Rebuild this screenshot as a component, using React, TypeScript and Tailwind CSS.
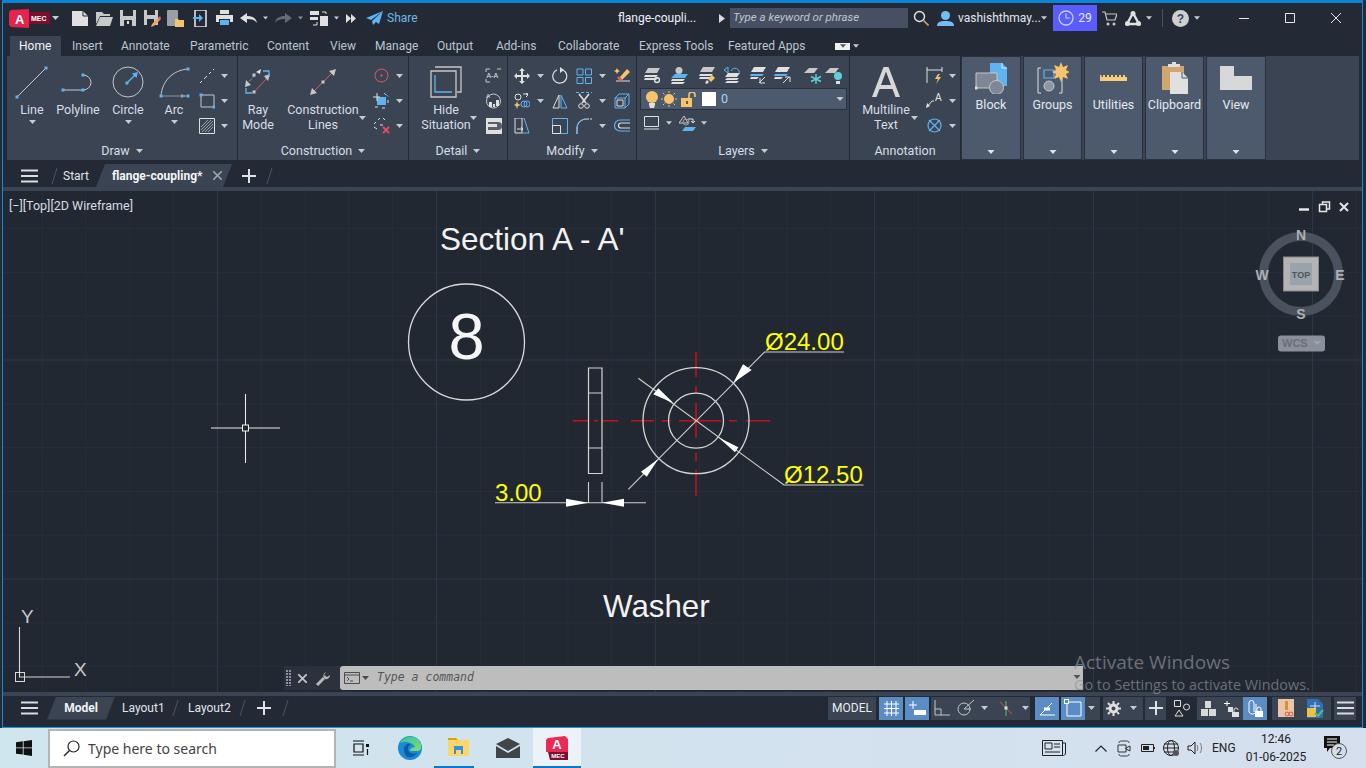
import React from "react";

const G = "#c8c8c8", L = "#e0e0e0", B = "#5eb4f2", Y = "#f7c46c", R = "#e0566a";

const Ic = ({ w = 16, h = 16, children }: any) => (
  <svg width={w} height={h} viewBox={`0 0 ${w} ${h}`} fill="none" className="block shrink-0">{children}</svg>
);
const Sq = ({ x, y, s = 3, c = B }: any) => <rect x={x - s / 2} y={y - s / 2} width={s} height={s} fill={c} />;
const Caret = ({ c = "#c5cbd3", w = 7 }: any) => (
  <svg width={w} height={4} viewBox="0 0 7 4" className="block shrink-0"><path d="M0 0h7L3.5 4z" fill={c} /></svg>
);
const Slash = ({ c = "#4c5462" }: any) => (
  <svg width={7} height={20} viewBox="0 0 7 20" className="block shrink-0"><path d="M6 2 1 18" stroke={c} /></svg>
);
const Burger = () => (
  <svg width={17} height={14} viewBox="0 0 17 14" className="block shrink-0"><path d="M0 1.5h17M0 7h17M0 12.5h17" stroke="#d8dce2" strokeWidth="2" /></svg>
);
const Plus = () => (
  <svg width={14} height={14} viewBox="0 0 14 14" className="block shrink-0"><path d="M7 0v14M0 7h14" stroke="#dfe3e8" strokeWidth="2" /></svg>
);

/* quick access */
const QNew = () => <Ic w={16} h={15}><path d="M0 0h11l5 5v10H0z" fill={L} /><path d="M11 0v5h5" stroke="#232a35" /></Ic>;
const QOpen = () => <Ic w={18} h={15}><path d="M1 1h6l2 2h6v2H5L1 13z" fill={G} /><path d="M5 6h13l-3 9H1z" fill={G} /></Ic>;
const QSave = () => <Ic w={16} h={16}><path d="M0 0h16v16H0z" fill={G} /><path d="M3 0h10v6H3z" fill="#232a35" /><path d="M4 10h8v6H4z" fill="#232a35" /><path d="M7 11h2v3H7z" fill={L} /></Ic>;
const QSaveAs = () => <Ic w={17} h={17}><path d="M0 0h14v15H0z" fill={G} /><path d="M3 0h8v5H3z" fill="#232a35" /><path d="M3 9h7v6H3z" fill="#232a35" /><path d="m8 14 7-7 2 2-7 7-3 1z" fill="#f0a35c" /><path d="m14 8 2-2 1 2-2 2z" fill="#e0566a" /></Ic>;
const QPhoneOpen = () => <Ic w={18} h={17}><rect x={0} y={0} width={11} height={16} rx={1} fill="#9a9fa6" /><path d="M8 9h3l1 1h5v7H8z" fill={Y} /></Ic>;
const QPhoneSave = () => <Ic w={14} h={17}><rect x={2} y={0} width={11} height={17} rx={1} stroke={L} strokeWidth="1.6" /><path d="M0 7h6V4l4 4-4 4V9H0z" fill={B} /></Ic>;
const QPrint = () => <Ic w={17} h={16}><path d="M4 0h9v4H4z" fill={L} /><path d="M0 5h17v7H0z" fill={L} /><path d="M3 9h11v7H3z" fill="#232a35" /><path d="M4 10h9v5H4z" fill={B} /></Ic>;
const QUndo = ({ c = L }: any) => <Ic w={17} h={11}><path d="M0 5 7 0v3c6 0 9 2 10 7-2-3-5-4-10-4v4z" fill={c} /></Ic>;
const QRedo = () => <Ic w={17} h={11}><path d="M17 5 10 0v3C4 3 1 5 0 10c2-3 5-4 10-4v4z" fill="#656c77" /></Ic>;
const QWorkspace = () => <Ic w={18} h={15}><path d="M0 0h9v4H0zM10 5h8v10h-8zM0 6h8v3H0z" fill={L} /><path d="M12 1h4v2M3 14h4v-3" stroke={L} /></Ic>;
const QMore = () => <Ic w={10} h={9}><path d="M0 0l5 4.5L0 9zM5 0l5 4.5L5 9z" fill={L} /></Ic>;
const QShare = () => <Ic w={17} h={14}><path d="M17 0 0 7l5 2zM17 0 6 10l1 4 3-3 3 2z" fill={B} /></Ic>;

/* draw panel */
const ILine = () => <Ic w={36} h={36}><path d="M3 33 32 4" stroke={G} /><Sq x={3} y={33} /><Sq x={32} y={4} /></Ic>;
const IPoly = () => <Ic w={36} h={36}><path d="M3 26h20M23 11a8 7.5 0 0 1 0 15" stroke={G} /><Sq x={3} y={26} /><Sq x={23} y={26} /><Sq x={23} y={11} /></Ic>;
const ICircle = () => <Ic w={36} h={36}><circle cx={18} cy={18} r={15} stroke={G} /><path d="M18 18l8-8" stroke={B} strokeWidth="1.5" /><path d="m28 8-6 1.5 4.5 4.5z" fill={B} /><Sq x={17} y={19} /></Ic>;
const IArc = () => <Ic w={36} h={36}><path d="M5 32C6 17 17 6 32 5" stroke={G} /><path d="M5 32h24" stroke="#8e959e" /><path d="m31 32-6-2v4z" fill="#8e959e" /><Sq x={5} y={32} /><Sq x={32} y={32} /><Sq x={32} y={5} /></Ic>;
const ICLine = () => <Ic><path d="M1 15l2-2m2-2 3-3m2-2 2-2m2-2 1-1" stroke={L} /></Ic>;
const IRect = () => <Ic><path d="M2 2h13v12H2z" stroke={G} /><Sq x={2} y={2} /><Sq x={15} y={14} /></Ic>;
const IHatch = () => <Ic><path d="M.5.5h15v15H.5z" stroke={L} /><path d="M2 9l7-7M2 12l10-10M3 14 14 3M6 14l8-8M9 14l5-5" stroke="#9aa0a8" /></Ic>;
/* construction */
const IRay = () => <Ic w={32} h={32}><path d="M4 19 14 8" stroke="#9aa0a8" strokeDasharray="3 2" /><path d="M12 26 26 11" stroke={R} /><path d="m3 21 1-7 5 5zM28 8l-6 2 4 5z" fill={G} /><path d="m14 6 5-3-1 5z" fill={L} /><path d="M21 5h6v6" stroke={B} strokeWidth="1.3" /><path d="M4 22v5h6" stroke={B} strokeWidth="1.3" /><Sq x={12} y={26} c={G} /><Sq x={12} y={9} c={G} /></Ic>;
const ICons = () => <Ic w={32} h={32}><path d="M5 27 27 5" stroke={R} /><path d="m3 29 2-7 5 5zM29 3l-7 2 5 5z" fill={G} /><Sq x={16} y={16} c={G} /></Ic>;
const ICons1 = () => <Ic w={15} h={15}><circle cx={7.5} cy={7.5} r={6.5} stroke={R} /><Sq x={7.5} y={7.5} s={2} c={R} /></Ic>;
const ICons2 = () => <Ic w={17} h={17}><path d="M4 5h9v8H4z" fill={B} /><path d="M0 5h7M4 1v8M11 1l2 2M2 15h3M9 16h3M15 8v3" stroke={L} /><path d="M11 1l5 4" stroke={B} strokeDasharray="2 1" /></Ic>;
const ICons3 = () => <Ic w={17} h={17}><path d="M1 7l2-2M5 3l2-2M10 1l2 2M1 10l3 2M7 8h3" stroke={L} /><path d="m10 10 6 6M16 10l-6 6" stroke="#e8485a" strokeWidth="2" /></Ic>;
/* detail */
const IHide = () => <Ic w={32} h={32}><path d="M5 1h26v25h-4" stroke={G} strokeWidth="1.3" /><path d="M1 5h25v26H1z" stroke={G} strokeWidth="1.3" /><path d="M5 9v17h17" stroke={B} strokeWidth="1.3" /></Ic>;
const IDet1 = () => <Ic w={17} h={15}><path d="M5 1H1v3M1 11v3h4M12 1h4" stroke={G} /><text x={1.5} y={10} fill={L} fontSize={7} fontFamily="Liberation Sans">A-A</text></Ic>;
const IDet2 = () => <Ic w={17} h={17}><circle cx={8.5} cy={9} r={7} stroke={G} /><path d="M4 10h3v5H4zM8 12h2v3H8zM11 8h3v6h-3z" fill={L} /><text x={1} y={6} fill={L} fontSize={6} fontFamily="Liberation Sans">A</text></Ic>;
const IDet3 = () => <Ic w={16} h={16}><path d="M0 0h16v16H0z" fill={L} /><path d="M2 4h10a2 2 0 0 1 0 8H2z" fill="#5a5f67" /><path d="M2 6h9v3H2z" fill={L} /></Ic>;
/* modify */
const IMove = () => <Ic><path d="M8 0l3 3H9v4h4V5l3 3-3 3V9H9v4h2l-3 3-3-3h2V9H3v2L0 8l3-3v2h4V3H5z" fill={L} /></Ic>;
const IRot = () => <Ic w={16} h={17}><path d="M11 3a7 7 0 1 1-6-.2" stroke={L} strokeWidth="1.2" /><path d="M8 0v6l4-3z" fill={L} /></Ic>;
const IArr = () => <Ic><path d="M1 1h6v6H1zM9.5 1h6v6h-6zM1 9.5h6v6H1zM9.5 9.5h6v6h-6z" stroke={B} /></Ic>;
const IErase = () => <Ic><path d="M2 13h14" stroke={L} /><path d="m6 9 7-8 3 3-8 8z" fill={Y} /><path d="m3 10 2-2 3 4-2 1z" fill="#e85a5a" /><path d="m3 0 1 2 2 1-2 1-1 2-1-2-2-1 2-1z" fill={Y} /></Ic>;
const ICopy = () => <Ic><circle cx={4} cy={4} r={3} stroke={L} /><path d="M9 1h5l-2 0M12 4l2-2-2-2" stroke={L} /><circle cx={10} cy={11} r={3} stroke={B} /><circle cx={13} cy={11} r={3} stroke={B} /><path d="m3 8 1 3 3 1-3 1-1 3-1-3-2-1 2-1z" fill={Y} /></Ic>;
const IMir = () => <Ic><path d="M7 2v13H1z" stroke={L} /><path d="M9 2v13h6z" stroke={B} /></Ic>;
const ITrim = () => <Ic w={16} h={17}><path d="M0 .5h16" stroke={B} strokeDasharray="3 2" /><path d="m3 2 7 9M13 2l-7 9" stroke={L} strokeWidth="1.6" /><circle cx={5} cy={14} r={2.3} stroke={L} /><circle cx={11} cy={14} r={2.3} stroke={L} /></Ic>;
const I3D = () => <Ic><path d="M1 5h10v10H1zM1 5l4-4h10v10l-4 4M11 5l4-4" stroke={B} /><path d="M3 7h6v6H3z" stroke={L} /></Ic>;
const IStretch = () => <Ic><path d="M1 0h7v15H1z" stroke={L} /><path d="M8 0h2l5 15H8" stroke={B} /><path d="M3 11h6M7 9l2 2-2 2" stroke={L} /></Ic>;
const IScale = () => <Ic><path d="M.5.5h15v15H.5z" stroke={B} /><path d="M.5 7.5h8v8h-8z" stroke={L} /></Ic>;
const IFillet = () => <Ic><path d="M1 16v-5C1 5 5 1 11 1" stroke={L} /><path d="M1 16v-6C1 5 4 2 9 1" stroke={B} /><path d="M11 1h5" stroke={L} strokeDasharray="2 1" /></Ic>;
const IOffset = () => <Ic w={16} h={13}><path d="M16 1H6a5.5 5.5 0 0 0 0 11h10" stroke={B} strokeWidth="1.2" /><path d="M16 4H7a2.5 2.5 0 0 0 0 5h9" stroke={L} strokeWidth="1.2" /></Ic>;
/* layers */
const Stack = ({ top = G, mid = L }: any) => (<><path d="M4 0h12l-3 5H1z" fill={top} /><path d="M1 7h13l-2 2H0zM1 10h13l-2 2H0z" fill={mid} /></>);
const L1 = () => <Ic><Stack /><circle cx={13} cy={12} r={2.5} stroke={L} strokeWidth="1.4" /></Ic>;
const L2 = () => <Ic w={17} h={17}><circle cx={8} cy={3.5} r={3.5} fill={G} /><path d="M4 7h13l-3 4H0z" fill={B} /><path d="M1 12h13l-2 2H0zM1 15h13l-2 2H0z" fill={L} /></Ic>;
const L3 = () => <Ic w={17} h={17}><Stack /><path d="m9 12 4-4 3 3-4 4z" fill={Y} /><path d="m8 13 2 2-2 2-2-1z" fill={L} /></Ic>;
const L4 = () => <Ic w={17} h={17}><path d="M4 6h12l-3 4H1zM3 11h12l-2 2H1zM3 14h12l-2 2H1z" fill={L} /><path d="M7 4a4 4 0 0 1 8 3M0 3l4-3v6z" stroke={B} fill="none" /></Ic>;
const L5 = () => <Ic w={17} h={17}><path d="M4 0h12l-3 5H1z" fill={L} /><path d="M1 7h13l-2 2H0z" fill={B} /><path d="M1 10h8l-2 2H0z" fill={L} /><path d="m9 16 6-6M10 11v5h5" stroke={L} /></Ic>;
const L6 = () => <Ic w={17} h={17}><path d="M4 0h12l-3 5H1z" fill={L} /><path d="M1 7h13l-2 2H0z" fill={B} /><path d="M1 10h8l-2 2H0z" fill={L} /><path d="m9 16 6-6M11 10h5v5" stroke={L} /></Ic>;
const L7 = () => <Ic w={18} h={16}><path d="M5 0h9l-4 5H0z" fill={G} /><path d="M12 6v10M7 8.5l10 5M17 8.5l-10 5" stroke="#5fd0d8" strokeWidth="1.4" /></Ic>;
const L8 = () => <Ic w={18} h={16}><path d="M5 0h9l-4 5H0z" fill={G} /><circle cx={13} cy={8} r={4} fill="#5fd0d8" /><path d="M11 13h4v3h-4z" fill={L} /></Ic>;
const Bulb = () => <Ic w={12} h={17}><circle cx={6} cy={6} r={6} fill={Y} /><path d="M3 12h6v2l-1 3H4l-1-3z" fill={L} /></Ic>;
const Sun = () => <Ic w={16} h={16}><circle cx={8} cy={8} r={5} fill={Y} /><path d="M8 0v2M8 14v2M0 8h2M14 8h2M2 2l1.5 1.5M12.5 12.5 14 14M2 14l1.5-1.5M12.5 3.5 14 2" stroke={Y} /></Ic>;
const Lock = () => <Ic w={15} h={15}><path d="M0 6h11v9H0z" fill={Y} /><path d="M8 6V3a3 3 0 0 1 6 0v2" stroke={Y} strokeWidth="1.6" /><path d="M5 9h2v3H5z" fill="#7a5a20" /></Ic>;
const Mon = () => <Ic w={15} h={14}><path d="M.5.5h14v10H.5z" stroke={L} /><path d="M0 13h15" stroke={L} /></Ic>;
const LMatch = () => <Ic w={17} h={16}><path d="M5 1 0 8h9z" stroke={G} /><circle cx={7} cy={7} r={3} stroke="#9a9fa6" /><path d="M9 4h5v4M12 6l2 2 2-2" stroke={L} /><path d="M6 12h11l-3 4H3z" fill={B} /></Ic>;
/* annotation */
const IDim = () => <Ic w={17} h={17}><path d="M1 0v16M16 0v5M1 3h15" stroke={L} /><path d="m12 7-3 5h3l-2 5 5-7h-3l2-3z" fill={Y} /></Ic>;
const ILead = () => <Ic w={17} h={15}><path d="m1 14 5-6h2" stroke={L} /><path d="m0 15 1-5 3 3z" fill={L} /><text x={9} y={8} fontSize={10} fill={L} fontFamily="Liberation Sans">A</text></Ic>;
const ITable = () => <Ic w={15} h={15}><circle cx={7.5} cy={7.5} r={6.5} stroke={B} strokeWidth="1.2" /><path d="m2 2 11 11M13 2 2 13" stroke={B} strokeWidth="1.2" /></Ic>;
/* collapsed */
const PBlock = () => <Ic w={32} h={32}><path d="M15 1h12l5 5v18H15z" fill={B} /><path d="M27 1v5h5" stroke="#dceaf5" /><path d="M1 11h21v15H1z" fill="#7d8796" stroke={G} /><Sq x={1} y={26} c={L} /><circle cx={21.5} cy={25.5} r={7} fill="#7d8796" stroke={G} /></Ic>;
const PGroups = () => <Ic w={32} h={32}><path d="M4 6H1v25h3M22 31h3V6" stroke={L} /><path d="M7 8h10v8H7z" stroke={B} strokeWidth="1.2" /><circle cx={12} cy={24} r={5} fill="#8d96a3" stroke={G} /><path d="m24 0 2 5 5-2-2 5 4 2-4 2 2 5-5-2-2 5-2-5-5 2 2-5-4-2 4-2-2-5 5 2z" fill="#f7c46c" /></Ic>;
const PUtil = () => <Ic w={28} h={6}><path d="M0 0h1.500v2H3V0h2v2h2V0h2v2h2V0h2v2h2V0h2v2h2V0h2v2h2V0h2v2h2V0v6H0z" fill="#f6cd79" /></Ic>;
const PClip = () => <Ic w={26} h={32}><path d="M0 4h22v24H0z" fill="#d2a66f" /><path d="M6 2h4V0h4v2h4v3H6z" fill={L} /><path d="M8 10h12l6 6v16H8z" fill={L} /><path d="M20 10v6h6" stroke="#4d5a6d" /></Ic>;
const PView = () => <Ic w={32} h={24}><path d="M0 0h14v10h18v14H0z" fill="#d8d8d8" /></Ic>;
/* status */
const SGrid = () => <Ic w={15} h={15}><path d="M3 0v15M7.5 0v15M12 0v15M0 3h15M0 7.5h15M0 12h15" stroke="#fff" /></Ic>;
const SSnap = () => <Ic w={17} h={15}><path d="M4 0v8M0 4h8" stroke="#fff" /><path d="M5 9h12v5H5z" fill="#fff" /></Ic>;
const SOrtho = () => <Ic w={16} h={16}><path d="M1 0v15h15M1 9h6v6" stroke={G} /></Ic>;
const SPolar = () => <Ic w={17} h={16}><circle cx={7} cy={9} r={6} stroke={G} /><path d="M7 9 17 0M7 9h7" stroke={G} /></Ic>;
const SIso = () => <Ic w={14} h={17}><path d="M7 1v15" stroke="#60c060" /><path d="M1 2l12 12" stroke="#d05050" /><Sq x={7} y={8} s={3} c={L} /></Ic>;
const SDyn = () => <Ic w={16} h={15}><path d="M1 14h15M1 14 13 2" stroke="#fff" /><path d="M5 8h6" stroke="#fff" strokeWidth="3" /></Ic>;
const SSel = () => <Ic w={18} h={18}><path d="M3 3h14v14H3z" stroke="#fff" /><rect x={0.5} y={0.5} width={4} height={4} fill="#5b8cc3" stroke="#fff" /></Ic>;
const SGear = () => <Ic w={15} h={15}><circle cx={7.5} cy={7.5} r={3.5} stroke={L} strokeWidth="3" /><path d="M7.5 0v3M7.5 12v3M0 7.5h3M12 7.5h3M2 2l2 2M11 11l2 2M2 13l2-2M11 4l2-2" stroke={L} strokeWidth="2" /></Ic>;
const SShapes = () => <Ic w={16} h={17}><path d="M.5.5h6v6h-6z" stroke={L} /><circle cx={12.5} cy={7} r={3} stroke={L} /><path d="m5 10 4 6H1z" stroke={L} /></Ic>;
const SIso3 = () => <Ic w={15} h={15}><path d="M4 0h6v7H4zM0 8h7v7H0zM8 8h7v7H8z" fill="#d8d8d8" /></Ic>;
const SMove = () => <Ic w={16} h={17}><path d="M4 1v5M1 3.5h6" stroke="#fff" /><path d="M5 7h5v5H5z" fill={L} /><path d="M9 12h7v5H9z" fill={L} /><path d="M11 12v-2a2 2 0 0 1 4 0" stroke={L} /></Ic>;
const SClip = () => <Ic w={16} h={19}><path d="M7 13V4a2.5 2.5 0 0 0-5 0v9a4 4 0 0 0 7 0V5" stroke="#fff" /><path d="M8 12h8v6H8z" fill="#fff" /><path d="M10 12v-2a2 2 0 0 1 4 0v2" stroke="#fff" /></Ic>;
const SOrange = () => <Ic w={18} h={19}><path d="M1 0h16v18H1z" fill="#e8c7a8" /><path d="M8 2h3v9H8z" fill="#e08a3a" /><circle cx={10} cy={15} r={2} stroke="#e0563a" /><circle cx={14} cy={15} r={2} stroke="#e0563a" /></Ic>;
const SDoc = () => <Ic w={18} h={19}><path d="M1 0h11l5 5v14H1z" fill="#2e6fb5" /><path d="M1 9h9v9H1z" fill="#f0c040" /><path d="m9 14 3 3 5-6" stroke="#4ec070" strokeWidth="2" /><path d="M9 3v8M4 7h10" stroke="#dde" /></Ic>;

const Big = ({ icon, label, label2, caret, corner, className }: any) => (
  <div className={`flex flex-col items-center pt-2 relative ${className}`}>
    <div className="h-[36px] flex items-center justify-center">{icon}</div>
    <div className="mt-[2px] leading-[15px] text-center whitespace-nowrap">{label}</div>
    {label2 && <div className="leading-[15px] text-center whitespace-nowrap">{label2}</div>}
    {caret && <div className="mt-[3px]"><Caret /></div>}
    {corner && <div className={`absolute top-[60px] ${corner}`}><Caret /></div>}
  </div>
);
const Small = ({ icon, caret = true, className = "" }: any) => (
  <div className={`h-[25px] flex items-center gap-[6px] ${className}`}>
    <div className="w-[17px] flex justify-center">{icon}</div>
    {caret ? <Caret /> : null}
  </div>
);
const Panel = ({ title, className, noCaret, children }: any) => (
  <div className={`flex flex-col border-r border-[#232a35] ${className}`}>
    <div className="h-[86px] flex">{children}</div>
    <div className="h-[18px] flex items-center justify-center gap-[6px] text-[#d7dee7]">{title}{noCaret ? null : <Caret />}</div>
  </div>
);
const Fold = ({ icon, label, className }: any) => (
  <div className={`h-[104px] flex flex-col items-center bg-[#4d5a6d] border border-[#2a313c] ${className}`}>
    <div className="h-[32px] mt-[5px] flex items-end justify-center">{icon}</div>
    <div className="mt-[2px] text-[#e4e9ef]">{label}</div>
    <div className="mt-auto mb-[5px]"><Caret c="#e0e4ea" w={8} /></div>
  </div>
);
const Cell = ({ icon, className }: any) => <div className={`flex items-center justify-center ${className}`}>{icon}</div>;

const tabs = [
  ["Insert", "w-[49px]"], ["Annotate", "w-[69px]"], ["Parametric", "w-[77px]"], ["Content", "w-[63px]"], ["View", "w-[45px]"],
  ["Manage", "w-[62px]"], ["Output", "w-[59px]"], ["Add-ins", "w-[62px]"], ["Collaborate", "w-[81px]"], ["Express Tools", "w-[89px]"], ["Featured Apps", "w-[107px]"],
];

const grid = () => {
  const out: any[] = [];
  for (let k = -1; k < 32; k++) {
    const x = 217.5 + 43.8 * (k - 5);
    out.push(<path key={"v" + k} d={`M${x} 191V692`} stroke={(k - 5) % 5 === 0 ? "#303746" : "#282f3a"} />);
  }
  for (let k = -1; k < 13; k++) {
    const y = 360 + 43.8 * (k - 5);
    out.push(<path key={"h" + k} d={`M3 ${y}H1362`} stroke={(k - 5) % 5 === 0 ? "#303746" : "#282f3a"} />);
  }
  return out;
};

const Canvas = () => (
  <svg width={1359} height={501} viewBox="3 191 1359 501" className="absolute inset-0 block" fontFamily="'Liberation Sans', Arial, sans-serif">
    {grid()}
    <text x={440} y={250} fontSize={31.5} fill="#f2f2f2">Section A - A'</text>
    <circle cx={466.5} cy={342} r={58} stroke="#d9d9d9" strokeWidth="1.3" fill="none" />
    <text x={466.5} y={359} fontSize={65} fill="#f5f5f5" textAnchor="middle">8</text>
    <text x={603} y={617} fontSize={31.3} fill="#f2f2f2">Washer</text>
    {/* red centre lines */}
    <path d="M573 420.7h16M594 420.7h4M602 420.7h16M631 420.7h23M662 420.7h9M679 420.7h42M729 420.7h8M746 420.7h24M696 352v25M696 386v8M696 403v35M696 453v8M696 470v26" stroke="#c8101c" strokeWidth="1.6" fill="none" />
    {/* part */}
    <path d="M588.5 368h13.5v105.5h-13.5zM588.5 393h13.5M588.5 448h13.5" stroke="#d4d4d4" strokeWidth="1.2" fill="none" />
    <circle cx={696} cy={420.7} r={53} stroke="#d4d4d4" strokeWidth="1.3" fill="none" />
    <circle cx={696} cy={420.7} r={27.5} stroke="#d4d4d4" strokeWidth="1.3" fill="none" />
    {/* leaders */}
    <path d="M628.3 489.3 764.5 352H844M638.3 378.3 784 485H863.5" stroke="#cfcfcf" strokeWidth="1.1" fill="none" />
    <path d="m733.3 382.7 18.4-12.7-8.7-5.7zM658.3 459l-17.3 12.7 5.7 5zM673.7 403.3l-20.4-9 5-6zM718.3 437.3l16.7 15 3.3-5z" fill="#fff" />
    <path d="M495 502.7H646M588.5 482v21M602 482v21" stroke="#cfcfcf" strokeWidth="1.1" fill="none" />
    <path d="M588.5 502.7 566 498.7v8zM602 502.7l22-4v8z" fill="#fff" />
    <text x={765} y={350} fontSize={24} fill="#ffff00">Ø24.00</text>
    <text x={784} y={483} fontSize={24} fill="#ffff00">Ø12.50</text>
    <text x={495} y={501} fontSize={24} fill="#ffff00">3.00</text>
    {/* crosshair */}
    <path d="M211 428h31M248 428h32M245.5 394v31M245.5 431v32" stroke="#e8e8e8" strokeWidth="1.1" fill="none" />
    <rect x={242.5} y={425} width={6} height={6} stroke="#f0f0f0" fill="none" />
    {/* ucs */}
    <path d="M19.5 627v50H70" stroke="#d8d8d8" strokeWidth="1.1" fill="none" />
    <rect x={15.5} y={672.5} width={9} height={9} stroke="#d8d8d8" fill="none" />
    <text x={21} y={623} fontSize={19} fill="#c8c8c8">Y</text>
    <text x={74} y={676} fontSize={19} fill="#c8c8c8">X</text>
    {/* view controls */}
    <path d="M1299 209.5h10" stroke="#e6e6e6" strokeWidth="2.5" />
    <path d="M1319.5 204.5h7v7h-7zM1322.5 204v-2h7v7h-3" stroke="#e6e6e6" strokeWidth="1.5" fill="none" />
    <path d="m1340 203 8 8M1348 203l-8 8" stroke="#e6e6e6" strokeWidth="2" />
    {/* view cube */}
    <circle cx={1301} cy={274} r={37.5} stroke="#4a525e" strokeWidth="9" fill="none" />
    <rect x={1283.5} y={257} width={35} height={34} fill="#b4b4b4" stroke="#8a8a8a" />
    <rect x={1290} y={263} width={22} height={22} fill="#9aa2ac" />
    <text x={1301} y={278} fontSize={9} fontWeight="700" textAnchor="middle" fill="#4e5560">TOP</text>
    <g fontSize={14} fontWeight="700" fill="#adb0b5" textAnchor="middle">
      <text x={1301} y={240}>N</text>
      <text x={1301} y={319}>S</text>
      <text x={1340} y={280}>E</text>
      <text x={1262} y={280}>W</text>
    </g>
    <rect x={1278} y={335.5} width={47} height={16} rx={3} fill="#8a8f9c" />
    <text x={1282} y={347} fontSize={11} fontWeight="700" fill="#696e7a">WCS</text>
    <path d="m1313 341 4 4 4-4" fill="#9ea3af" />
  </svg>
);

export default function App() {
  return (
    <div className="w-[1366px] h-[768px] overflow-hidden relative bg-[#232a35] text-[12px] font-['Roboto','Noto_Sans',sans-serif]">
      {/* window */}
      <div className="h-[728px] ml-[2px] mr-[3px] flex flex-col border-t-[3px] border-t-[#0a84d6] border-x border-x-[#0a8fe0] border-b border-b-[#1b9ad8] bg-[#232a35] text-[#d7dee7]">
        {/* title row */}
        <div className="h-[33px] pb-[3px] flex items-center shrink-0">
          <svg width={41} height={19} viewBox="0 0 41 19" className="block shrink-0 ml-[6px]" fontFamily="'Liberation Sans', sans-serif">
            <path d="M2 1 20 0v19L2 18 0 16V3z" fill="#e5234f" />
            <text x={6} y={15} fontSize={13} fontWeight="700" fill="#fff">A</text>
            <rect x={20} y={3} width={21} height={12} fill="#7c0f2e" />
            <text x={22} y={12} fontSize={7} fontWeight="700" fill="#fff">MEC</text>
          </svg>
          <div className="ml-[2px]"><Caret /></div>
          <div className="ml-[9px] flex">
            <Cell className="w-[24px]" icon={<QNew />} />
            <Cell className="w-[24px]" icon={<QOpen />} />
            <Cell className="w-[24px]" icon={<QSave />} />
            <Cell className="w-[24px]" icon={<QSaveAs />} />
            <Cell className="w-[24px]" icon={<QPhoneOpen />} />
            <Cell className="w-[24px]" icon={<QPhoneSave />} />
            <Cell className="w-[24px]" icon={<QPrint />} />
            <Cell className="w-[24px]" icon={<QUndo />} />
            <Cell className="w-[10px]" icon={<Caret w={5} />} />
            <Cell className="w-[26px]" icon={<QRedo />} />
            <Cell className="w-[8px]" icon={<Caret w={5} c="#8a909a" />} />
            <Cell className="w-[28px] ml-[1px]" icon={<QWorkspace />} />
            <Cell className="w-[6px]" icon={<Caret w={5} />} />
            <Cell className="w-[22px] ml-[1px]" icon={<QMore />} />
            <Cell className="w-[22px] ml-[1px]" icon={<QShare />} />
          </div>
          <span className="ml-[2px] w-[31px] text-[#6fb7ec] whitespace-nowrap">Share</span>
          <span className="ml-[200px] w-[96px] text-[#eef1f5] whitespace-nowrap">flange-coupli...</span>
          <svg width={6} height={9} viewBox="0 0 6 9" className="block ml-[5px] shrink-0"><path d="M0 0l6 4.5L0 9z" fill="#d8dce2" /></svg>
          <div className="ml-[5px] w-[178px] h-[20px] bg-[#465062] flex items-center px-[3px] text-[11.5px] italic text-[#c0c6cf] whitespace-nowrap">Type a keyword or phrase</div>
          <div className="ml-[4px] w-[17px] flex justify-center">
            <Ic w={16} h={16}><circle cx={6.5} cy={6.5} r={5} stroke="#e4e4e4" strokeWidth="1.4" /><path d="m10.5 10.5 5 5" stroke="#c8a070" strokeWidth="1.6" /></Ic>
          </div>
          <div className="ml-[8px] w-[17px] flex justify-center">
            <Ic w={17} h={15}><circle cx={8.5} cy={4.5} r={4.5} fill="#73bdf3" /><path d="M0 15c0-4 3-5 8.500-5s8.500 1 8.500 5z" fill="#73bdf3" /></Ic>
          </div>
          <span className="ml-[4px] w-[82px] whitespace-nowrap text-[#e2e6ec] text-[12px]">vashishthmay...</span>
          <div className="ml-[1px]"><Caret w={6} /></div>
          <div className="ml-[6px] w-[44px] h-[26px] bg-[#5b5cff] flex items-center justify-center gap-[4px] text-[#e6e8ff]">
            <Ic w={16} h={16}><circle cx={8} cy={8} r={7} stroke="#bfd0ff" strokeWidth="1.3" /><path d="M8 3.5V8h4" stroke="#bfd0ff" strokeWidth="1.2" /></Ic>
            <span>29</span>
          </div>
          <div className="ml-[4px] w-[16px] flex justify-center">
            <Ic w={15} h={15}><path d="M0 1h3l2 8h8l2-6H4" stroke="#c8c8c8" strokeWidth="1.2" /><circle cx={6} cy={13} r={1.5} fill="#c8c8c8" /><circle cx={12} cy={13} r={1.5} fill="#c8c8c8" /></Ic>
          </div>
          <div className="ml-[6px] w-[20px] flex justify-center">
            <Ic w={16} h={15}><path d="M8 2 2 13h12z" stroke={L} strokeWidth="2.4" /><circle cx={8} cy={2.5} r={2.5} fill={L} /><circle cx={2.5} cy={12.5} r={2.5} fill={L} /><circle cx={13.5} cy={12.5} r={2.5} fill={L} /></Ic>
          </div>
          <div className="ml-[3px]"><Caret w={6} /></div>
          <div className="ml-[10px] w-px h-[18px] bg-[#4a525e]" />
          <div className="ml-[9px]">
            <svg width={17} height={17} viewBox="0 0 17 17" className="block"><circle cx={8.5} cy={8.5} r={8.5} fill="#cfcfcf" /><text x={8.5} y={13} fontSize={12} fontWeight="700" textAnchor="middle" fill="#3b4453" fontFamily="'Liberation Sans'">?</text></svg>
          </div>
          <div className="ml-[5px]"><Caret w={6} /></div>
          <div className="ml-[38px]"><Ic w={12} h={12}><path d="M1 6.5h10" stroke="#e6e6e6" /></Ic></div>
          <div className="ml-[35px]"><Ic w={10} h={10}><path d="M.5.5h9v9h-9z" stroke="#e6e6e6" /></Ic></div>
          <div className="ml-[36px]"><Ic w={10} h={10}><path d="m0 0 10 10M10 0 0 10" stroke="#e6e6e6" /></Ic></div>
        </div>
        {/* ribbon tabs */}
        <div className="h-[20px] flex items-center ml-[7px] shrink-0">
          <div className="w-[51px] h-[20px] pl-[9px] bg-[#3b4453] flex items-center text-[#f2f5f8]">Home</div>
          <div className="w-[11px]" />
          {tabs.map(([t, w]) => <div key={t} className={`${w} whitespace-nowrap text-[#bcc6d2]`}>{t}</div>)}
          <div className="w-[15px] h-[7px] bg-[#f0f0f0] flex items-center justify-center"><Caret c="#555" w={6} /></div>
          <div className="ml-[3px]"><Caret w={6} /></div>
        </div>
        {/* ribbon */}
        <div className="h-[104px] ml-[4px] w-[1352px] bg-[#3b4453] flex shrink-0 text-[12.5px]">
          <Panel title="Draw" className="w-[231px]">
            <Big className="w-[50px]" icon={<ILine />} label="Line" caret />
            <Big className="w-[42px]" icon={<IPoly />} label="Polyline" />
            <Big className="w-[58px]" icon={<ICircle />} label="Circle" caret />
            <Big className="w-[34px]" icon={<IArc />} label="Arc" caret />
            <div className="pt-[7px] pl-[7px]">
              <Small icon={<ICLine />} />
              <Small icon={<IRect />} />
              <Small icon={<IHatch />} />
            </div>
          </Panel>
          <Panel title="Construction" className="w-[171px]">
            <Big className="w-[40px]" icon={<IRay />} label="Ray" label2="Mode" />
            <Big className="w-[90px]" icon={<ICons />} label="Construction" label2="Lines" corner="right-[2px]" />
            <div className="pt-[7px] pl-[5px]">
              <Small icon={<ICons1 />} />
              <Small icon={<ICons2 />} />
              <Small icon={<ICons3 />} />
            </div>
          </Panel>
          <Panel title="Detail" className="w-[99px]">
            <Big className="w-[74px]" icon={<IHide />} label="Hide" label2="Situation" corner="right-[6px]" />
            <div className="pt-[7px] pl-[2px]">
              <Small icon={<IDet1 />} caret={false} />
              <Small icon={<IDet2 />} caret={false} />
              <Small icon={<IDet3 />} caret={false} />
            </div>
          </Panel>
          <Panel title="Modify" className="w-[129px]">
            <div className="pt-[7px] pl-[5px] grid grid-cols-[18px_18px_22px_26px_10px_30px] grid-rows-[25px_25px_25px] items-center justify-items-center h-fit">
              <IMove /><Caret /><IRot /><IArr /><Caret /><IErase />
              <ICopy /><Caret /><IMir /><ITrim /><Caret /><I3D />
              <IStretch /><div /><IScale /><IFillet /><Caret /><IOffset />
            </div>
          </Panel>
          <Panel title="Layers" className="w-[213px]">
            <div className="flex flex-col w-full">
              <div className="h-[25px] mt-[7px] pl-[6px] flex items-center">
                <Cell className="w-[17px]" icon={<L1 />} />
                <Cell className="w-[17px] ml-[11px]" icon={<L2 />} />
                <Cell className="w-[17px] ml-[11px]" icon={<L3 />} />
                <Cell className="w-[17px] ml-[8px]" icon={<L4 />} />
                <Cell className="w-[17px] ml-[9px]" icon={<L5 />} />
                <Cell className="w-[17px] ml-[7px]" icon={<L6 />} />
                <Cell className="w-[18px] ml-[13px]" icon={<L7 />} />
                <Cell className="w-[18px] ml-[3px]" icon={<L8 />} />
              </div>
              <div className="mx-[3px] h-[22px] w-[207px] bg-[#4d5a6d] border border-[#2a313c] flex items-center pl-[5px] pr-[2px]">
                <Bulb /><span className="ml-[3px]"><Sun /></span><span className="ml-[4px]"><Lock /></span>
                <span className="ml-[6px] w-[14px] h-[14px] bg-white" />
                <span className="ml-[5px] text-[#a9d4f5]">0</span>
                <span className="ml-auto"><Caret w={8} /></span>
              </div>
              <div className="h-[25px] pl-[7px] flex items-center">
                <Mon /><span className="ml-[7px]"><Caret w={6} /></span>
                <span className="ml-[7px]"><LMatch /></span><span className="ml-[5px]"><Caret w={6} /></span>
              </div>
            </div>
          </Panel>
          <Panel title="Annotation" className="w-[111px]" noCaret>
            <Big className="w-[72px]" icon={
              <svg width={28} height={30} viewBox="0 0 28 30" className="block"><path d="M11.5 0h5L28 30h-4.5l-3-8H7.5l-3 8H0zM14 4.5 9 18h10z" fill="#d8d8d8" fillRule="evenodd" /></svg>
            } label="Multiline" label2="Text" corner="right-[4px]" />
            <div className="pt-[7px] pl-[4px]">
              <Small icon={<IDim />} />
              <Small icon={<ILead />} />
              <Small icon={<ITable />} />
            </div>
          </Panel>
          <div className="flex gap-[2px]">
            <Fold className="w-[60px]" icon={<PBlock />} label="Block" />
            <Fold className="w-[59px]" icon={<PGroups />} label="Groups" />
            <Fold className="w-[59px]" icon={<div className="mb-[13px]"><PUtil /></div>} label="Utilities" />
            <Fold className="w-[59px]" icon={<PClip />} label="Clipboard" />
            <Fold className="w-[60px]" icon={<div className="mb-[4px]"><PView /></div>} label="View" />
          </div>
        </div>
        {/* file tabs */}
        <div className="h-[23px] mt-[4px] flex items-center shrink-0">
          <div className="ml-[18px]"><Burger /></div>
          <div className="ml-[13px]"><Slash /></div>
          <span className="ml-[5px] w-[31px] text-[#e0e4ea]">Start</span>
          <div className="ml-[2px] w-[136px] h-[23px] bg-[#3b4453] [clip-path:polygon(9px_0,100%_0,calc(100%-9px)_100%,0_100%)] flex items-center pl-[16px] text-[#f4f6f8] font-bold text-[12px]">
            <span className="w-[92px] whitespace-nowrap">flange-coupling*</span>
            <span className="ml-[9px]"><Ic w={9} h={9}><path d="m0 0 9 9M9 0 0 9" stroke="#9aa0a8" strokeWidth="1.6" /></Ic></span>
          </div>
          <div className="ml-[10px]"><Plus /></div>
          <div className="ml-[10px]"><Slash /></div>
        </div>
        <div className="h-[4px] bg-[#3b4453] shrink-0" />
        {/* canvas */}
        <div className="flex-1 relative bg-[#212831] overflow-hidden">
          <Canvas />
          <div className="absolute left-[6px] top-[6px] text-[#d8dde3] leading-[18px] text-[12.5px]">[−][Top][2D Wireframe]</div>
          <div className="absolute left-[281px] top-[475px] w-[799px] h-[24px] flex items-stretch">
            <div className="w-[56px] bg-[#2b323e] flex items-center pl-[2px] gap-[6px]">
              <Ic w={6} h={16}><path d="M1 0v16M4 0v16" stroke="#8c929b" strokeWidth="2" strokeDasharray="2 1" /></Ic>
              <Ic w={9} h={9}><path d="m0 0 9 9M9 0 0 9" stroke="#c4c4c4" strokeWidth="1.8" /></Ic>
              <span className="ml-[3px]"><Ic w={15} h={15}><path d="m1 14 7-7" stroke="#b8b8b8" strokeWidth="3" /><path d="M9 8a4 4 0 0 1 1-7l-2 3 3 2 3-2a4 4 0 0 1-5 4z" fill="#b8b8b8" /></Ic></span>
            </div>
            <div className="flex-1 bg-[#bdbdbd] rounded-l-[3px] flex items-center pl-[4px] relative">
              <Ic w={16} h={12}><path d="M.5.5h15v11H.5z" stroke="#4b4b4b" /><path d="M.5 3h15" stroke="#4b4b4b" /><path d="m3 5 2 2-2 2M6 9h3" stroke="#4b4b4b" /></Ic>
              <span className="ml-[2px]"><Caret c="#4b4b4b" /></span>
              <span className="ml-[8px] font-['DejaVu_Sans_Mono',monospace] italic text-[11.5px] text-[#555]">Type a command</span>
              <span className="absolute right-[2px] top-[9px]"><Caret c="#555" w={8} /></span>
            </div>
          </div>
        </div>
        <div className="h-[4px] bg-[#3b4453] shrink-0" />
        {/* status */}
        <div className="h-[31px] flex items-center shrink-0 pb-[7px] relative">
          <div className="ml-[18px]"><Burger /></div>
          <div className="ml-[9px] w-[68px] h-[23px] bg-[#3b4453] [clip-path:polygon(9px_0,100%_0,calc(100%-9px)_100%,0_100%)] flex items-center justify-center font-bold text-[#f0f3f6]">Model</div>
          <span className="ml-[7px] w-[42px] text-[#e0e4ea]">Layout1</span>
          <div className="ml-[8px]"><Slash /></div>
          <span className="ml-[9px] w-[43px] text-[#e0e4ea]">Layout2</span>
          <div className="ml-[8px]"><Slash /></div>
          <div className="ml-[11px]"><Plus /></div>
          <div className="ml-[11px]"><Slash /></div>
          <div className="ml-[539px] flex items-stretch h-[23px] text-[#e8edf2]">
            <div className="w-[48px] bg-[#3b4453] flex items-center justify-center">MODEL</div>
            <Cell className="ml-[3px] w-[24px] bg-[#5b8cc3]" icon={<SGrid />} />
            <Cell className="ml-[2px] w-[24px] bg-[#5b8cc3]" icon={<SSnap />} />
            <div className="ml-[2px] w-[99px] bg-[#3b4453] flex items-center">
              <span className="ml-[3px]"><SOrtho /></span>
              <span className="ml-[7px]"><SPolar /></span>
              <span className="ml-[7px]"><Caret /></span>
              <span className="ml-[11px]"><SIso /></span>
              <span className="ml-[9px]"><Caret /></span>
            </div>
            <Cell className="ml-[5px] w-[24px] bg-[#5b8cc3]" icon={<SDyn />} />
            <div className="ml-[2px] w-[39px] bg-[#3b4453] flex items-center">
              <Cell className="w-[24px] h-full bg-[#5b8cc3]" icon={<SSel />} />
              <span className="ml-[3px]"><Caret /></span>
            </div>
            <div className="ml-[3px] w-[40px] bg-[#3b4453] flex items-center">
              <span className="ml-[3px]"><SGear /></span>
              <span className="ml-[9px]"><Caret /></span>
            </div>
            <Cell className="ml-[2px] w-[21px] bg-[#3b4453]" icon={<Plus />} />
            <Cell className="ml-[5px] w-[22px]" icon={<SShapes />} />
            <div className="ml-[4px] w-[70px] bg-[#3b4453] flex items-center">
              <Cell className="w-[22px]" icon={<SIso3 />} />
              <Cell className="w-[24px]" icon={<SMove />} />
              <Cell className="w-[24px] h-full bg-[#5b8cc3]" icon={<SClip />} />
            </div>
            <div className="ml-[5px] w-[59px] bg-[#3b4453] flex items-center">
              <Cell className="w-[27px]" icon={<SOrange />} />
              <Cell className="w-[32px]" icon={<SDoc />} />
            </div>
            <Cell className="ml-[3px] w-[22px] bg-[#3b4453]" icon={<Burger />} />
          </div>
        </div>
      </div>
      {/* watermark */}
      <div className="absolute left-[1074px] top-[649px] text-[#8d9299]/70 font-['Open_Sans',sans-serif] pointer-events-none">
        <div className="text-[19px] leading-[26px] whitespace-nowrap">Activate Windows</div>
        <div className="text-[14.4px] leading-[20px] whitespace-nowrap">Go to Settings to activate Windows.</div>
      </div>
      {/* taskbar */}
      <div className="h-[40px] flex items-stretch bg-gradient-to-r from-[#cfe6ee] to-[#d5dfee] text-[#1a1a1a]">
        <div className="w-[48px] flex items-center justify-center">
          <Ic w={16} h={16}><path d="M0 2.3 6.8 1.3V7.500H0zM7.600 1.200 16 0v7.500H7.600zM0 8.300h6.800v6.300L0 13.700zM7.600 8.300H16V16l-8.400-1.200z" fill="#111" /></Ic>
        </div>
        <div className="w-[288px] bg-white border-2 border-[#b4b4b4] flex items-center pl-[13px] mt-px">
          <Ic w={17} h={17}><circle cx={10.5} cy={6.5} r={5.5} stroke="#222" strokeWidth="1.2" /><path d="M6.5 10.5 1 16" stroke="#222" strokeWidth="1.4" /></Ic>
          <span className="ml-[8px] text-[14px] font-['Noto_Sans',sans-serif] text-[#444] whitespace-nowrap">Type here to search</span>
        </div>
        <Cell className="w-[50px]" icon={
          <Ic w={16} h={16}><path d="M1 4h9v8H1zM0 1h11M0 15h11" stroke="#111" strokeWidth="1.2" /><path d="M13 4h3v3h-3z" fill="#111" /><path d="M14.5 9v6" stroke="#111" strokeWidth="1.2" /></Ic>
        } />
        <Cell className="w-[48px]" icon={
          <svg width={24} height={24} viewBox="0 0 24 24" className="block"><defs><linearGradient id="e1" x1="0" y1="0" x2="1" y2="1"><stop offset="0" stopColor="#35c1a3" /><stop offset="1" stopColor="#7fe06a" /></linearGradient></defs><circle cx={12} cy={12} r={12} fill="#1a8ad8" /><path d="M2 7C5 0 17-2 22 6c2 4 2 9-3 9h-7c0-3 3-4 5-4-2-5-11-6-15-4z" fill="url(#e1)" /><path d="M6 13c0-4 4-6 7-5-2 1-3 3-3 5 0 3 4 6 9 4-2 3-6 5-9 4-3-1-4-5-4-8z" fill="#0c59a4" /></svg>
        } />
        <div className="w-[49px] flex flex-col items-center relative">
          <div className="mt-[9px]"><Ic w={21} h={19}><path d="M0 1h8l2 2H0z" fill="#e0a100" /><path d="M0 3h21v16H0z" fill="#fbd767" /><path d="M6 9h9v8h-2v-4H8v4H6z" fill="#3a8edb" /></Ic></div>
          <div className="absolute bottom-0 left-0 right-[9px] h-[2px] bg-[#0b78d0]" />
        </div>
        <Cell className="w-[50px]" icon={
          <Ic w={24} h={20}><path d="M0 6 12 0l12 6-12 7z" fill="#404548" /><path d="M0 8l12 7 12-7v12H0z" fill="#404548" /></Ic>
        } />
        <div className="w-[48px] bg-[#ecf3f8] flex items-center justify-center relative">
          <svg width={24} height={24} viewBox="0 0 24 24" className="block" fontFamily="'Liberation Sans'"><path d="M3 2 20 0l3 3v13H1V4z" fill="#ea2a55" /><text x={12} y={13} fontSize={13} fontWeight="700" fill="#fff" textAnchor="middle">A</text><path d="M3 16h20v8H5z" fill="#7c0f2e" /><text x={13} y={22} fontSize={6} fontWeight="700" fill="#fff" textAnchor="middle">MEC</text></svg>
          <div className="absolute bottom-0 inset-x-0 h-[2px] bg-[#0b78d0]" />
        </div>
        {/* tray */}
        <div className="ml-[461px] flex items-center">
          <Ic w={24} h={16}><path d="M.5.5h20v15h-20zM20.5 3h3v10a2.5 2.5 0 0 1-3 2.500" stroke="#222" /><path d="M3 3h7v6H3z" stroke="#222" /><path d="M12 4h6M12 7h6M3 12h15" stroke="#222" /></Ic>
          <div className="ml-[29px]"><Ic w={12} h={7}><path d="M.5 6.5 6 1l5.500 5.500" stroke="#222" strokeWidth="1.2" /></Ic></div>
          <div className="ml-[10px]"><Ic w={14} h={17}><path d="M2 3c0-2 1-2 5-2s5 0 5 2M2 14c0 2 1 2 5 2s5 0 5-2" stroke="#333" /><path d="M1 5h8v7H1zM9 8l4-2v5l-4-2z" stroke="#333" /></Ic></div>
          <div className="ml-[10px]"><Ic w={14} h={8}><path d="M.5.5h12v7H.5z" stroke="#222" /><path d="M2 2h6v4H2z" fill="#222" /><path d="M13 3h1v2h-1z" fill="#222" /></Ic></div>
          <div className="ml-[8px]"><Ic w={16} h={16}><circle cx={8} cy={8} r={7.5} stroke="#222" /><ellipse cx={8} cy={8} rx={3.5} ry={7.5} stroke="#222" /><path d="M0 8h16M1 4h14M1 12h14" stroke="#222" /><circle cx={13} cy={13} r={3} fill="#555" /></Ic></div>
          <div className="ml-[8px]"><Ic w={16} h={14}><path d="M1 5h3l4-4v12L4 9H1z" stroke="#222" /><path d="M10 4c1 2 1 4 0 6M13 2c2 3 2 7 0 10" stroke="#777" /></Ic></div>
          <span className="ml-[9px] w-[24px] text-[12px] text-[#222]">ENG</span>
          <div className="ml-[1px] w-[78px] text-center text-[12px] leading-[18px] text-[#222]">
            <div>12:46</div>
            <div>01-06-2025</div>
          </div>
          <div className="ml-[9px] relative w-[24px] h-[24px]">
            <Ic w={17} h={16}><path d="M0 0h16v12H6l-3 4v-4H0z" fill="#111" /><path d="M3 3h10M3 6h10M3 9h7" stroke="#fff" /></Ic>
            <div className="absolute left-[7px] top-[7px] w-[16px] h-[16px] rounded-full border border-[#555] bg-[#d2dfea] flex items-center justify-center text-[11px] leading-none text-[#222]">2</div>
          </div>
        </div>
      </div>
    </div>
  );
}
